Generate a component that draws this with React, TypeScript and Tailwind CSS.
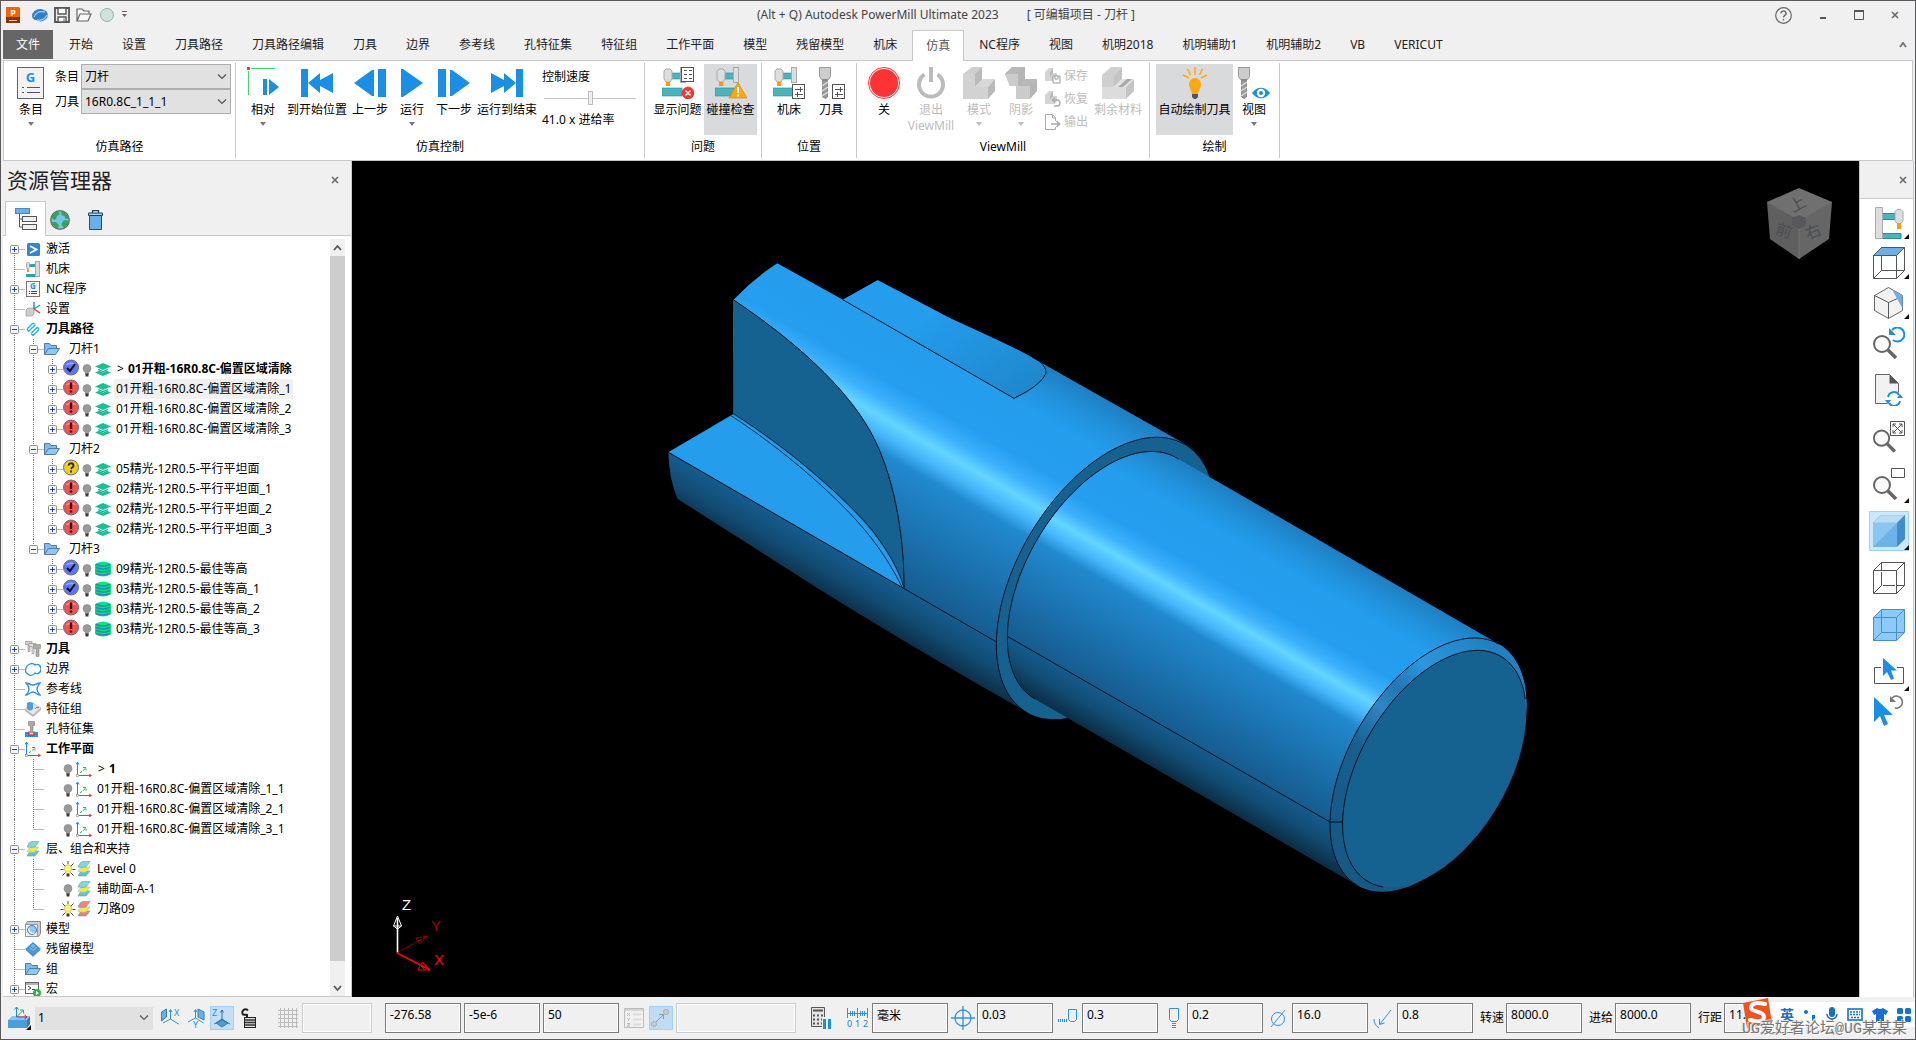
import type { FC, ReactNode } from "react";

/* ---------- ribbon icons ---------- */

const GCodeIcon: FC = () => (
  <svg width="28" height="32" viewBox="0 0 28 32">
    <rect x="0.5" y="0.5" width="26" height="31" fill="#f2f2f2" stroke="#666" />
    <text x="13.5" y="15" textAnchor="middle" fontSize="13" fontWeight="700" fill="#1a8fe8">
      G
    </text>
    <path d="M10 20.5h13M10 25.5h13" stroke="#555" />
    <path d="M5 20.5h2M5 25.5h2" stroke="#555" />
  </svg>
);

const RelativeIcon: FC = () => (
  <svg width="32" height="32" viewBox="0 0 32 32">
    <path d="M1.500 4v24M4 1.500h24" stroke="#3bd671" />
    <rect width="3" height="3" fill="#f33" />
    <rect x="16" y="12" width="4" height="16" fill="#1a8fe8" />
    <path d="M22 12l10 8-10 8z" fill="#1a8fe8" />
  </svg>
);

const ToStartIcon: FC = () => (
  <svg width="32" height="32" viewBox="0 0 32 32" fill="#1a8fe8">
    <path d="M0 2h7v28H0zM7 16L19 6v7l13-7v20l-13-7v7z" />
  </svg>
);

const ToEndIcon: FC = () => (
  <svg width="32" height="32" viewBox="0 0 32 32" fill="#1a8fe8">
    <path d="M25 2h7v28h-7zM25 16L13 6v7L0 6v20l13-7v7z" />
  </svg>
);

const PrevIcon: FC = () => (
  <svg width="32" height="32" viewBox="0 0 32 32" fill="#1a8fe8">
    <path d="M24 2h8v28h-8zM20 3v26h-2L0 16 18 3z" />
  </svg>
);

const NextIcon: FC = () => (
  <svg width="32" height="32" viewBox="0 0 32 32" fill="#1a8fe8">
    <path d="M0 2h8v28H0zM12 3v26h2l18-13L14 3z" />
  </svg>
);

const PlayIcon: FC = () => (
  <svg width="32" height="32" viewBox="0 0 32 32" fill="#1a8fe8">
    <path d="M5 2h2l20 14L7 30H5z" />
  </svg>
);

const MachineShape: FC = () => (
  <>
    <rect x="8" y="6" width="11" height="6" fill="#45b5bf" stroke="#2b8d96" strokeWidth="0.6" />
    <rect x="0" y="21" width="20" height="8" fill="#45b5bf" stroke="#2b8d96" strokeWidth="0.6" />
    <rect x="18.500" y="0.500" width="5" height="15" fill="#ddd" stroke="#aaa" />
    <path d="M4 2h4l2 2v8l-2 3H4l-2-3V4z" fill="#ddd" stroke="#aaa" />
    <rect x="4" y="15" width="4" height="4" fill="#f90" />
  </>
);

const SlidersBadge: FC = () => (
  <g>
    <rect x="19.500" y="17.500" width="12" height="14" fill="#fff" stroke="#555" />
    <path d="M22 22.500h8M22 27.500h8M27.500 20v5M24.500 25v5" stroke="#555" />
  </g>
);

const ShowIssuesIcon: FC = () => (
  <svg width="32" height="32" viewBox="0 0 32 32">
    <MachineShape />
    <rect x="19.500" y="0.500" width="12" height="14" fill="#fff" stroke="#555" />
    <path d="M22 3.500h3m2 0h3M22 7.500h3m2 0h3M22 11.500h3m2 0h3" stroke="#555" />
    <circle cx="26" cy="26" r="6" fill="#f33" stroke="#c11" strokeWidth="0.500" />
    <path d="M23.500 23.500l5 5m0-5l-5 5" stroke="#fff" strokeWidth="1.500" />
  </svg>
);

const CollisionIcon: FC = () => (
  <svg width="32" height="32" viewBox="0 0 32 32">
    <MachineShape />
    <path d="M23 15.500L32 31H14z" fill="#ffa70f" stroke="#c97f00" strokeWidth="0.600" />
    <path d="M23 20v6m0 1.500v2" stroke="#fff" strokeWidth="2" />
  </svg>
);

const MachinePosIcon: FC = () => (
  <svg width="32" height="32" viewBox="0 0 32 32">
    <MachineShape />
    <SlidersBadge />
  </svg>
);

const DrillShape: FC = () => (
  <>
    <path d="M7.500 0.500h11v9l-2 3h-7l-2-3z" fill="#ccc" stroke="#999" />
    <path d="M10.500 13h5v17l-2 1.500-3-1.500z" fill="#999" stroke="#666" strokeWidth="0.600" />
    <path d="M10 19l6-4M10 24l6-4M10 29l6-4" stroke="#ddd" strokeWidth="1.500" />
  </>
);

const ToolPosIcon: FC = () => (
  <svg width="32" height="32" viewBox="0 0 32 32">
    <g transform="translate(-3)">
      <DrillShape />
    </g>
    <g transform="translate(-2)">
      <SlidersBadge />
    </g>
  </svg>
);

const RecordIcon: FC = () => (
  <svg width="32" height="32" viewBox="0 0 32 32">
    <circle cx="16" cy="16" r="15.500" fill="#fff" stroke="#f33" />
    <circle cx="16" cy="16" r="14" fill="#f33" />
  </svg>
);

const PowerIcon: FC = () => (
  <svg width="32" height="32" viewBox="0 0 32 32" fill="none" stroke="#bbb" strokeWidth="4">
    <path d="M9.500 7.500a12 12 0 1 0 13 0M16 0v15" />
  </svg>
);

const ModeIcon: FC = () => (
  <svg width="32" height="32" viewBox="0 0 32 32">
    <path d="M0 7l9-7h10v12l-7 6v13H0z" fill="#cfcfcf" />
    <path d="M12 7l7-7v13l-7 7z" fill="#bababa" />
    <path d="M12 20l8-8h12l-7 8z" fill="#d8d8d8" />
    <path d="M0 7h12v13h13v12H0z" fill="#d2d2d2" />
    <path d="M25 20l7-8v12l-7 8z" fill="#bababa" />
  </svg>
);

const ShadingIcon: FC = () => (
  <svg width="32" height="32" viewBox="0 0 32 32">
    <path d="M0 7l7-7h13v12h12v12l-7 8H11V19H5z" fill="#b5b5b5" />
    <path d="M0 7h13v12h12v13H11V19H5z" fill="#cbcbcb" />
    <path d="M0 7l7-7h13l-7 7zM13 19l7-7h12l-7 7z" fill="#b8b8b8" />
  </svg>
);

const RestIcon: FC = () => (
  <svg width="32" height="32" viewBox="0 0 32 32">
    <path d="M0 8l9-8h11l-8 8v12H0z" fill="#cfcfcf" />
    <path d="M0 20h24v12H0z" fill="#dcdcdc" />
    <path d="M12 8l8-8v12l-8 8z" fill="#c4c4c4" />
    <path d="M24 20l8-8v12l-8 8z" fill="#c4c4c4" />
    <path d="M12 20l8-8h12l-8 8z" fill="#e2e2e2" />
    <path d="M16 20l9-8h5l-9 8z" fill="#aaa" />
  </svg>
);

const BulbIcon: FC = () => (
  <svg width="32" height="32" viewBox="0 0 32 32">
    <path d="M16 0v8M8.500 2l3 6M23.500 2l-3 6M4 8l6 3M28 8l-6 3" stroke="#ffa70f" strokeWidth="1.500" />
    <path d="M16 11a6 6 0 0 0-6 6c0 4 2.500 6 3 10h6c.5-4 3-6 3-10a6 6 0 0 0-6-6z" fill="#ffa70f" />
    <path d="M13 27h6v3l-2 2h-2l-2-2z" fill="#555" />
  </svg>
);

const ViewIcon: FC = () => (
  <svg width="32" height="32" viewBox="0 0 32 32">
    <g transform="translate(-7)">
      <DrillShape />
    </g>
    <path d="M14 26c5-7 13-7 18 0-5 7-13 7-18 0z" fill="#1a8fe8" />
    <circle cx="23" cy="26" r="4.200" fill="#fff" />
    <circle cx="23" cy="26" r="2" fill="#1a8fe8" />
  </svg>
);

const SmallBlock: FC<{ children?: ReactNode }> = ({ children }) => (
  <svg width="16" height="16" viewBox="0 0 16 16">
    <path d="M0 4l4-4h4v5h4v5l-2 3H0z" fill="#d4d4d4" />
    <path d="M5 4l3-4v5l-3 4z" fill="#bbb" />
    {children}
  </svg>
);

/* ---------- explorer tree icons ---------- */

const ActiveIcon = (
  <svg width="16" height="16" viewBox="0 0 16 16">
    <rect x="2" y="2" width="13" height="13" rx="1.500" fill="#2e86d6" />
    <path d="M5 5l6.500 3.500L5 12" fill="none" stroke="#fff" strokeWidth="1.800" />
  </svg>
);
const MachineIcon = (
  <svg width="16" height="16" viewBox="0 0 16 16">
    <path d="M4 3h8v3H4zM1 13h11v3H1z" fill="#2fa3ad" />
    <rect x="10.500" y="0.500" width="4" height="15" fill="#ddd" stroke="#aaa" />
    <rect x="1.500" y="1.500" width="3" height="6" rx="1" fill="#ddd" stroke="#aaa" />
    <rect x="2" y="8" width="2" height="3" fill="#f90" />
  </svg>
);
const NcIcon = (
  <svg width="16" height="16" viewBox="0 0 16 16" className="overflow-visible">
    <rect x="1.500" y="0.500" width="13" height="15" fill="#f6f6f6" stroke="#777" />
    <text x="8" y="8" textAnchor="middle" fontSize="8" fontWeight="700" fill="#1a8fe8">
      G
    </text>
    <path d="M4 10.500h1m1 0h6M4 12.500h1m1 0h6" stroke="#444" />
  </svg>
);
const SetupIcon = (
  <svg width="16" height="16" viewBox="0 0 16 16">
    <path d="M1 9l2-2h6v6l-2 2H1z" fill="#ccc" stroke="#999" strokeWidth="0.700" />
    <path d="M9 8V1" stroke="#1a8fe8" strokeWidth="1.500" />
    <path d="M9 8l6-4" stroke="#2bb35a" strokeWidth="1.500" />
    <path d="M9 8l6 4" stroke="#e33" strokeWidth="1.500" />
  </svg>
);
const ToolpathIcon = (
  <svg width="16" height="16" viewBox="0 0 16 16" fill="none" stroke="#19b6dd" strokeWidth="1.300">
    <path d="M2 8l6-6M3.500 10.500l7-7M6 12.500l6.500-6.500M8 14.500l6-6M2 8l1.500 2.500M10.500 3.500L8 2M6 12.500l2 2M12.500 6L14 8.500" />
  </svg>
);
const FolderIcon = (
  <svg width="16" height="16" viewBox="0 0 16 16">
    <path d="M0.500 13.500v-11h5l1.500 2h5.500v3" fill="#7dbcf2" stroke="#56789a" />
    <path d="M0.500 13.500l4-6h11l-4 6z" fill="#8cc8fa" stroke="#56789a" />
  </svg>
);
const ToolsIcon = (
  <svg width="16" height="16" viewBox="0 0 16 16" stroke="#888" strokeWidth="0.600">
    <path d="M0 0.500h7v3H5v7H3v-7H0z" fill="#ccc" />
    <path d="M4 2.500h7v3H9v7H7v-7H4z" fill="#ddd" />
    <path d="M8.500 3.500h7v4h-1.500v8h-3v-8H8.500z" fill="#aaa" />
  </svg>
);
const BoundaryIcon = (
  <svg width="16" height="16" viewBox="0 0 16 16">
    <path
      d="M5 3c2-1 4 0 5 1 3-2 6 1 6 4s-3 6-6 4c-2 3-6 3-7 1-4-1-3-8 2-10z"
      fill="none"
      stroke="#2c92e0"
      strokeWidth="1.300"
    />
  </svg>
);
const PatternIcon = (
  <svg width="16" height="16" viewBox="0 0 16 16">
    <path
      d="M1 2c3 0 4 2 7 2s4-2 7-2c-2 3-3 4-3 6s1 4 3 6c-3 0-4-3-7-3s-4 3-7 3c2-2 3-4 3-6S3 4 1 2z"
      fill="none"
      stroke="#2c92e0"
      strokeWidth="1.400"
    />
  </svg>
);
const FeatureGroupIcon = (
  <svg width="16" height="16" viewBox="0 0 16 16">
    <path d="M0 8l8-6 8 5-8 7z" fill="#e8e8e8" stroke="#aaa" strokeWidth="0.600" />
    <path d="M0 8l8 6 8-7v2l-8 7-8-6z" fill="#b5b5b5" />
    <path d="M2 2v6c2 2 4 2 6 0V2c-2-1.500-4-1.500-6 0z" fill="#4a9fdb" />
    <path d="M10 8c1-2 3-2 4-1" stroke="#3a87c2" fill="none" />
  </svg>
);
const HoleSetIcon = (
  <svg width="16" height="16" viewBox="0 0 16 16">
    <path d="M0 11h4v5H0zM9 11h4v5H9zM3 14h7v2H3z" fill="#2c92e0" />
    <path d="M4 10.500v3.500h5v-3.500" fill="none" stroke="#e33" strokeWidth="1.500" />
    <path d="M3.500 0.500h6v4H8v7.500H5.500V4.500h-2z" fill="#aaa" stroke="#777" strokeWidth="0.600" />
  </svg>
);
const WorkplaneIcon = (
  <svg width="16" height="16" viewBox="0 0 16 16">
    <path d="M1.500 14V2M0 3.500L1.500 1 3 3.500" stroke="#1a8fe8" fill="none" />
    <path d="M3 14.500h12M13 13l2.500 1.500L13 16" stroke="#f33" fill="none" />
    <path d="M4 12l6-5M7 6.500h3v3" stroke="#2bb35a" strokeDasharray="3 1" fill="none" />
    <rect x="0.500" y="13.500" width="2" height="2" fill="#fff" stroke="#999" strokeWidth="0.700" />
  </svg>
);
const levelIcon = (top: string, bottom: string) => (
  <svg width="16" height="16" viewBox="0 0 16 16" strokeWidth="0.600" stroke="#5aa">
    <path d="M2 15q2-4.500 4-5h8l-4 5z" fill={bottom} />
    <path d="M2 10.500q2-4.500 5-4.500h7l-4 5q-4 .5-8-.5z" fill="#f5ea3c" stroke="#bb9" />
    <path d="M2 6q2-5.500 5-5.500h7l-4 5.500q-4 .8-8 0z" fill={top} />
  </svg>
);
const LevelIcon = levelIcon("#7fd6e6", "#5fc3d8");
const LevelRedIcon = levelIcon("#f58080", "#ef7a7a");
const ModelIcon = (
  <svg width="16" height="16" viewBox="0 0 16 16">
    <path d="M0.500 3.500l2-3h13v12l-2 3h-13z" fill="#ccc" stroke="#888" />
    <path d="M0.500 3.500h12v12h-12z" fill="#eee" stroke="#999" />
    <circle cx="7" cy="9" r="4.500" fill="#8cc8fa" stroke="#4a80b0" />
    <path d="M4.500 6a4 4 0 0 0 6 5.500A4.500 4.500 0 0 1 4.500 6z" fill="#fff" />
  </svg>
);
const StockIcon = (
  <svg width="16" height="16" viewBox="0 0 16 16">
    <path d="M0 8l8-7 8 7-8 8z" fill="#4f9cd8" />
    <path d="M3 7l5-5 5 5-5 4z" fill="#6db4ea" stroke="#357fb8" strokeWidth="0.700" />
    <path d="M1 9l7 5 7-5M5 5l3 3 3-3" stroke="#357fb8" strokeWidth="0.700" fill="none" />
  </svg>
);
const MacroIcon = (
  <svg width="16" height="16" viewBox="0 0 16 16">
    <rect x="0.500" y="1.500" width="13" height="11" fill="#fff" stroke="#666" />
    <path d="M0 3h14" stroke="#666" />
    <path d="M3 5l3 2-3 2M7 8.500h3" stroke="#444" fill="none" />
    <circle cx="12" cy="12" r="4" fill="#2bb350" />
    <path d="M11 10l3 2-3 2z" fill="#fff" />
  </svg>
);
const OffsetIcon = (
  <svg width="16" height="16" viewBox="0 0 16 16">
    <path d="M0 5.500L8 2l8 3.500L8 9z" fill="#12c48f" />
    <path d="M0 11.500l4-1.700 4 1.700 4-1.700 4 1.700L8 15z" fill="#12c48f" />
    <path d="M3 8.500l5 2 5-2" fill="none" stroke="#19a6ad" strokeWidth="1.300" />
  </svg>
);
const ConstantZIcon = (
  <svg width="16" height="16" viewBox="0 0 16 16">
    <path d="M0 3q8-5 16 0v10q-8 5-16 0z" fill="#00e878" />
    <path
      d="M1 3.500q7 3 14 0M1 6.500q7 3 14 0M1 9.500q7 3 14 0M1 12.500q7 3 14 0"
      fill="none"
      stroke="#1f8fb5"
      strokeWidth="1.400"
    />
  </svg>
);

const StatusDot: FC<{ kind: string }> = ({ kind }) => {
  const fill = kind === "ok" ? "#5b76ff" : kind === "warn" ? "#f2524f" : "#f0cc1e";
  return (
    <svg width="16" height="20" viewBox="0 0 16 20" className="shrink-0">
      <circle cx="8" cy="8.500" r="7.500" fill={fill} stroke="#6b6b7d" />
      <path d="M2.500 6.500a6 5 0 0 1 11 0q-5-2.500-11 0z" fill="#fff" opacity="0.400" />
      {kind === "ok" && <path d="M4 9l3 3 5-7" fill="none" stroke="#111" strokeWidth="2" />}
      {kind === "warn" && <path d="M8 3.500v6.500m0 1.500v2" stroke="#400" strokeWidth="2.400" />}
      {kind === "ask" && (
        <path d="M5.500 6.500a2.500 2.200 0 1 1 3.500 2l-1 1.500m0 1.500v2" fill="none" stroke="#222" strokeWidth="1.800" />
      )}
    </svg>
  );
};

const Lamp: FC<{ on?: boolean }> = ({ on }) => (
  <svg width="16" height="20" viewBox="0 0 16 20" className="shrink-0">
    {on && (
      <path
        d="M8 2v3M0.500 10.500h3M12.500 10.500h3M2.500 4.500l3 3M13.500 4.500l-3 3M2.500 16.500l3-3M13.500 16.500l-3-3"
        stroke="#444"
      />
    )}
    <circle cx="8" cy="9.500" r={on ? 3.700 : 4} fill={on ? "#fff27a" : "#999"} stroke={on ? "#b39b2e" : "#888"} strokeWidth="0.600" />
    <path d="M6 12.500h4v3H6z" fill={on ? "#fff27a" : "#999"} />
    <path d="M6.500 14.500h3v3h-3z" fill="#4a3430" />
  </svg>
);

/* ---------- shared pieces ---------- */

const Chevron: FC = () => (
  <svg width="10" height="6" viewBox="0 0 10 6" className="pointer-events-none absolute right-1 top-1/2 -translate-y-1/2">
    <path d="M1 0.500l4 4 4-4" fill="none" stroke="#555" strokeWidth="1.200" />
  </svg>
);

const CloseIcon: FC = () => (
  <svg width="8" height="8" viewBox="0 0 8 8">
    <path d="M1 1l6 6M7 1L1 7" stroke="#666" strokeWidth="1.500" />
  </svg>
);

interface IRibbonButtonProps {
  label: string;
  second?: string;
  icon: ReactNode;
  width: string;
  active?: boolean;
  arrow?: boolean;
  disabled?: boolean;
}

const RibbonButton: FC<IRibbonButtonProps> = ({ label, second, icon, width, active, arrow, disabled }) => (
  <button
    type="button"
    disabled={disabled}
    className={`flex h-[71px] flex-col items-center pt-[3px] leading-4 whitespace-nowrap ${width} ${
      active ? "bg-[#d9dadc]" : ""
    } ${disabled ? "text-[#bdbdbd]" : ""}`}
  >
    {icon}
    <span className="mt-[3px]">{label}</span>
    {second && <span>{second}</span>}
    {arrow && (
      <svg width="6" height="4" viewBox="0 0 6 4" className="mt-1">
        <path d="M0 0h6L3 4z" fill={disabled ? "#bbb" : "#777"} />
      </svg>
    )}
  </button>
);

const RibbonGroup: FC<{ title: string; children: ReactNode }> = ({ title, children }) => (
  <section className="my-[2px] flex flex-col border-r border-[#c8c8c8]">
    <div className="flex pt-[1px] pr-1 pl-[6px]">{children}</div>
    <h2 className="mt-1 text-center leading-4">{title}</h2>
  </section>
);

/* ---------- title bar and ribbon ---------- */

const TitleBar: FC = () => (
  <header className="flex h-[29px] shrink-0 items-center pb-[1px]">
    <div className="flex flex-1 items-center gap-[6px] pl-1">
      <svg width="16" height="18" viewBox="0 0 16 18">
        <path d="M1 1h13l1 1v15H1z" fill="#f0640a" />
        <path d="M1 11h14v6H1z" fill="#8c3405" />
        <text x="8" y="9.500" textAnchor="middle" fontSize="9" fontWeight="700" fill="#fff">
          P
        </text>
        <path d="M4 14.500h8" stroke="#e8c8b4" />
      </svg>
      <svg width="16" height="16" viewBox="0 0 16 16" className="ml-[5px]">
        <path d="M0 9c0-5 7-9 12-6 4 1 5 6 2 9s-7 3-10 1c-2 0-4-2-4-4z" fill="#2d7fc9" />
        <path d="M2 10c2-5 6-6 11-5M5 13c5 1 8-1 10-5" stroke="#8fd0ff" fill="none" strokeWidth="1.300" />
      </svg>
      <svg width="16" height="16" viewBox="0 0 16 16">
        <path d="M1 1h14v14H1z" fill="#eee" stroke="#555" strokeWidth="1.800" />
        <path d="M4 1h8v6H4zM4 10h8v5H4z" fill="#fff" stroke="#555" strokeWidth="1.400" />
        <path d="M10 11.500v3" stroke="#555" />
      </svg>
      <svg width="16" height="16" viewBox="0 0 16 16">
        <path d="M1 14V2h5l2 2h5v3M1 14l3-7h11l-3 7z" fill="#f7f7f7" stroke="#666" strokeWidth="1.200" />
      </svg>
      <svg width="16" height="16" viewBox="0 0 16 16" className="ml-[1px]">
        <circle cx="8" cy="8" r="6.500" fill="#cfe3db" stroke="#8fb5a5" />
      </svg>
      <svg width="7" height="8" viewBox="0 0 7 8">
        <path d="M1 0.500h5" stroke="#666" />
        <path d="M1 3h5L3.500 6z" fill="#666" />
      </svg>
    </div>
    <h1 className="pr-3 leading-4 whitespace-pre text-[#444]">
      (Alt + Q) Autodesk PowerMill Ultimate 2023{"        "} [ 可编辑项目 - 刀杆 ]
    </h1>
    <div className="flex flex-1 items-center justify-end gap-[27px] pr-4">
      <button type="button" aria-label="help">
        <svg width="17" height="17" viewBox="0 0 17 17" fill="none" stroke="#666">
          <circle cx="8.500" cy="8.500" r="7.800" strokeWidth="1.200" />
          <path d="M6 6.500a2.500 2.300 0 1 1 3.500 2l-1 1.500v.5m0 1.500v1.500" strokeWidth="1.400" />
        </svg>
      </button>
      <button type="button" aria-label="minimize">
        <svg width="8" height="10" viewBox="0 0 8 10">
          <path d="M1 8h6" stroke="#555" strokeWidth="2" />
        </svg>
      </button>
      <button type="button" aria-label="maximize">
        <svg width="10" height="10" viewBox="0 0 10 10">
          <path d="M0.500 1h9v8.500h-9z" fill="none" stroke="#555" />
          <path d="M0 1h10" stroke="#555" strokeWidth="2" />
        </svg>
      </button>
      <button type="button" aria-label="close">
        <CloseIcon />
      </button>
    </div>
  </header>
);

const TABS = [
  "开始",
  "设置",
  "刀具路径",
  "刀具路径编辑",
  "刀具",
  "边界",
  "参考线",
  "孔特征集",
  "特征组",
  "工作平面",
  "模型",
  "残留模型",
  "机床",
  "仿真",
  "NC程序",
  "视图",
  "机明2018",
  "机明辅助1",
  "机明辅助2",
  "VB",
  "VERICUT",
];

const TabBar: FC = () => (
  <nav className="mx-[2px] flex h-[30px] shrink-0 whitespace-nowrap">
    <button type="button" className="mb-[1px] w-[50px] bg-[#666] text-white">
      文件
    </button>
    <div className="ml-[2px] flex flex-1 gap-[1px]">
      {TABS.map((tab) => (
        <button
          key={tab}
          type="button"
          className={
            tab === "仿真"
              ? "relative -mb-[1px] border border-b-0 border-[#c8c8c8] bg-white px-[13px] text-[#555]"
              : "px-[14px] text-[#222]"
          }
        >
          {tab}
        </button>
      ))}
    </div>
    <button type="button" aria-label="collapse" className="px-1.5">
      <svg width="8" height="6" viewBox="0 0 8 6">
        <path d="M1 5l3-4 3 4" fill="none" stroke="#777" strokeWidth="2" />
      </svg>
    </button>
  </nav>
);

const Ribbon: FC = () => (
  <div className="mx-[2px] flex h-[101px] shrink-0 border border-[#c8c8c8] bg-white">
    <RibbonGroup title="仿真路径">
      <RibbonButton label="条目" icon={<GCodeIcon />} width="w-[42px]" arrow />
      <div className="ml-[3px] grid grid-cols-[26px_150px] content-start">
        <label htmlFor="entry" className="self-center">
          条目
        </label>
        <div className="relative">
          <select id="entry" className="h-[25px] w-full appearance-none border border-[#adadad] bg-[#e1e1e1] pl-[3px]">
            <option>刀杆</option>
          </select>
          <Chevron />
        </div>
        <label htmlFor="tool" className="self-center">
          刀具
        </label>
        <div className="relative">
          <select id="tool" className="h-[25px] w-full appearance-none border border-[#adadad] bg-[#e1e1e1] pl-[3px]">
            <option>16R0.8C_1_1_1</option>
          </select>
          <Chevron />
        </div>
      </div>
    </RibbonGroup>
    <RibbonGroup title="仿真控制">
      <RibbonButton label="相对" icon={<RelativeIcon />} width="w-[42px]" arrow />
      <RibbonButton label="到开始位置" icon={<ToStartIcon />} width="w-[66px]" />
      <RibbonButton label="上一步" icon={<PrevIcon />} width="w-[40px]" />
      <RibbonButton label="运行" icon={<PlayIcon />} width="w-[44px]" arrow />
      <RibbonButton label="下一步" icon={<NextIcon />} width="w-[40px]" />
      <RibbonButton label="运行到结束" icon={<ToEndIcon />} width="w-[66px]" />
      <div className="flex w-[100px] flex-col pt-[5px] pl-[2px]">
        <label htmlFor="speed" className="leading-4">
          控制速度
        </label>
        <input
          id="speed"
          type="range"
          defaultValue={51}
          className="mt-[5px] ml-[2px] h-4 w-[92px] appearance-none bg-[linear-gradient(#c4c4c4,#c4c4c4)] bg-[length:100%_1px] bg-center bg-no-repeat [&::-webkit-slider-thumb]:h-[14px] [&::-webkit-slider-thumb]:w-[5px] [&::-webkit-slider-thumb]:appearance-none [&::-webkit-slider-thumb]:border [&::-webkit-slider-thumb]:border-[#bbb] [&::-webkit-slider-thumb]:bg-[#f0f0f0]"
        />
        <span className="mt-[6px] leading-4">41.0 x 进给率</span>
      </div>
    </RibbonGroup>
    <RibbonGroup title="问题">
      <RibbonButton label="显示问题" icon={<ShowIssuesIcon />} width="w-[53px]" />
      <RibbonButton label="碰撞检查" icon={<CollisionIcon />} width="w-[53px]" active />
    </RibbonGroup>
    <RibbonGroup title="位置">
      <RibbonButton label="机床" icon={<MachinePosIcon />} width="w-[42px]" />
      <RibbonButton label="刀具" icon={<ToolPosIcon />} width="w-[42px]" />
    </RibbonGroup>
    <RibbonGroup title="ViewMill">
      <RibbonButton label="关" icon={<RecordIcon />} width="w-[42px]" />
      <RibbonButton label="退出" second="ViewMill" icon={<PowerIcon />} width="w-[52px]" disabled />
      <RibbonButton label="模式" icon={<ModeIcon />} width="w-[44px]" arrow disabled />
      <RibbonButton label="阴影" icon={<ShadingIcon />} width="w-[40px]" arrow disabled />
      <div className="flex w-[50px] flex-col pl-1 text-[#bdbdbd]">
        <button type="button" disabled className="flex h-[23px] items-center gap-[3px] whitespace-nowrap">
          <SmallBlock>
            <path d="M8 8h7v7H8z" fill="#fff" stroke="#999" />
            <path d="M10 8v3h3V8" stroke="#999" fill="none" />
          </SmallBlock>
          保存
        </button>
        <button type="button" disabled className="flex h-[23px] items-center gap-[3px] whitespace-nowrap">
          <SmallBlock>
            <path d="M8 9h4a3 3 0 0 1 0 6H9M10 6.500L7.500 9l2.500 2.500" stroke="#aaa" fill="none" strokeWidth="1.300" />
          </SmallBlock>
          恢复
        </button>
        <button type="button" disabled className="flex h-[23px] items-center gap-[3px] whitespace-nowrap">
          <svg width="16" height="16" viewBox="0 0 16 16" fill="none" stroke="#aaa">
            <path d="M10.500 7V4L7.500 0.500H0.500v15h10V13M7.500 0.500V4h3" />
            <path d="M6 10h8M11.500 7l3 3-3 3" strokeWidth="1.600" />
          </svg>
          输出
        </button>
      </div>
      <RibbonButton label="剩余材料" icon={<RestIcon />} width="w-[54px]" disabled />
    </RibbonGroup>
    <RibbonGroup title="绘制">
      <RibbonButton label="自动绘制刀具" icon={<BulbIcon />} width="w-[77px]" active />
      <RibbonButton label="视图" icon={<ViewIcon />} width="w-[42px]" arrow />
    </RibbonGroup>
  </div>
);

/* ---------- explorer ---------- */

interface ITreeRow {
  depth: number;
  label: string;
  icon: ReactNode;
  box?: "+" | "-";
  status?: string;
  lamp?: "on" | "off";
  bold?: boolean;
  current?: boolean;
  selected?: boolean;
  last?: boolean;
  // whether the parent level's line runs on past this row
  parentLine?: boolean;
}

const toolpath = (status: string, label: string, icon: ReactNode, rest: Partial<ITreeRow> = {}): ITreeRow => ({
  depth: 2,
  box: "+",
  lamp: "off",
  parentLine: true,
  status,
  label,
  icon,
  ...rest,
});

const ROWS: ITreeRow[] = [
  { depth: 0, label: "激活", icon: ActiveIcon, box: "+" },
  { depth: 0, label: "机床", icon: MachineIcon },
  { depth: 0, label: "NC程序", icon: NcIcon, box: "+" },
  { depth: 0, label: "设置", icon: SetupIcon },
  { depth: 0, label: "刀具路径", icon: ToolpathIcon, box: "-", bold: true },
  { depth: 1, label: "刀杆1", icon: FolderIcon, box: "-" },
  toolpath("ok", "01开粗-16R0.8C-偏置区域清除", OffsetIcon, { bold: true, current: true }),
  toolpath("warn", "01开粗-16R0.8C-偏置区域清除_1", OffsetIcon, { selected: true }),
  toolpath("warn", "01开粗-16R0.8C-偏置区域清除_2", OffsetIcon),
  toolpath("warn", "01开粗-16R0.8C-偏置区域清除_3", OffsetIcon, { last: true }),
  { depth: 1, label: "刀杆2", icon: FolderIcon, box: "-" },
  toolpath("ask", "05精光-12R0.5-平行平坦面", OffsetIcon),
  toolpath("warn", "02精光-12R0.5-平行平坦面_1", OffsetIcon),
  toolpath("warn", "02精光-12R0.5-平行平坦面_2", OffsetIcon),
  toolpath("warn", "02精光-12R0.5-平行平坦面_3", OffsetIcon, { last: true }),
  { depth: 1, label: "刀杆3", icon: FolderIcon, box: "-", last: true },
  toolpath("ok", "09精光-12R0.5-最佳等高", ConstantZIcon, { parentLine: false }),
  toolpath("ok", "03精光-12R0.5-最佳等高_1", ConstantZIcon, { parentLine: false }),
  toolpath("warn", "03精光-12R0.5-最佳等高_2", ConstantZIcon, { parentLine: false }),
  toolpath("warn", "03精光-12R0.5-最佳等高_3", ConstantZIcon, { parentLine: false, last: true }),
  { depth: 0, label: "刀具", icon: ToolsIcon, box: "+", bold: true },
  { depth: 0, label: "边界", icon: BoundaryIcon, box: "+" },
  { depth: 0, label: "参考线", icon: PatternIcon },
  { depth: 0, label: "特征组", icon: FeatureGroupIcon },
  { depth: 0, label: "孔特征集", icon: HoleSetIcon },
  { depth: 0, label: "工作平面", icon: WorkplaneIcon, box: "-", bold: true },
  { depth: 1, label: "1", icon: WorkplaneIcon, lamp: "off", bold: true, current: true },
  { depth: 1, label: "01开粗-16R0.8C-偏置区域清除_1_1", icon: WorkplaneIcon, lamp: "off" },
  { depth: 1, label: "01开粗-16R0.8C-偏置区域清除_2_1", icon: WorkplaneIcon, lamp: "off" },
  { depth: 1, label: "01开粗-16R0.8C-偏置区域清除_3_1", icon: WorkplaneIcon, lamp: "off", last: true },
  { depth: 0, label: "层、组合和夹持", icon: LevelIcon, box: "-" },
  { depth: 1, label: "Level 0", icon: LevelIcon, lamp: "on" },
  { depth: 1, label: "辅助面-A-1", icon: LevelIcon, lamp: "off" },
  { depth: 1, label: "刀路09", icon: LevelRedIcon, lamp: "on", last: true },
  { depth: 0, label: "模型", icon: ModelIcon, box: "+" },
  { depth: 0, label: "残留模型", icon: StockIcon },
  { depth: 0, label: "组", icon: FolderIcon },
  { depth: 0, label: "宏", icon: MacroIcon, box: "+" },
];

const Guide: FC<{ line?: boolean }> = ({ line }) => (
  <span className="flex w-[19px] shrink-0 self-stretch pl-[9px]">
    {line && <span className="border-l border-dotted border-[#777]" />}
  </span>
);

const TreeRow: FC<{ row: ITreeRow; first: boolean }> = ({ row, first }) => (
  <li className="flex h-5 items-center whitespace-nowrap">
    {row.depth > 0 && <Guide line />}
    {row.depth > 1 && <Guide line={row.parentLine} />}
    <svg width="20" height="20" viewBox="0 0 20 20" className="shrink-0">
      <path
        d={`M9.500 ${first ? 10 : 0}V${row.last ? 10 : 20}M9.500 10.500H20`}
        stroke="#777"
        strokeDasharray="1 1"
      />
      {row.box && <rect x="5.500" y="6.500" width="8" height="8" rx="1" fill="#f6f6f6" stroke="#8f8f8f" />}
      {row.box && <path d="M7 10.500h5" stroke="#24449c" />}
      {row.box === "+" && <path d="M9.500 8v5" stroke="#24449c" />}
    </svg>
    {row.status && <StatusDot kind={row.status} />}
    {row.depth === 1 && row.lamp && <span className="w-4 shrink-0" />}
    {row.lamp && <Lamp on={row.lamp === "on"} />}
    <span className="shrink-0">{row.icon}</span>
    {row.depth === 1 && !row.lamp && <span className="w-1" />}
    <span
      className={`ml-[3px] px-[2px] py-[2px] leading-4 ${row.bold ? "font-bold" : ""} ${
        row.selected ? "bg-[#f0f0f0]" : ""
      }`}
    >
      {row.current && <span className="mx-[1px] font-normal">&gt; </span>}
      {row.label}
    </span>
  </li>
);

const Explorer: FC = () => (
  <aside className="ml-[2px] flex w-[349px] shrink-0 flex-col border-r border-[#c8c8c8]">
    <div className="flex h-10 items-center justify-between pr-3 pb-[2px] pl-1">
      <h2 className="text-[21px] leading-8 text-[#222]">资源管理器</h2>
      <button type="button" aria-label="close panel">
        <CloseIcon />
      </button>
    </div>
    <div className="flex h-[34px] items-center pl-[2px]">
      <button
        type="button"
        aria-label="tree"
        className="relative -mb-[1px] flex h-[35px] w-[41px] items-center justify-center border border-b-0 border-[#c8c8c8] bg-white"
      >
        <svg width="22" height="22" viewBox="0 0 22 22">
          <path d="M4.500 6v13H8M4.500 11H8" fill="none" stroke="#555" />
          <rect x="0.500" y="0.500" width="14" height="5" fill="#6ab0e6" stroke="#4a8cc0" />
          <rect x="7.500" y="8.500" width="14" height="5" fill="#f0f0f0" stroke="#555" />
          <rect x="7.500" y="16.500" width="14" height="5" fill="#f0f0f0" stroke="#555" />
        </svg>
      </button>
      <button type="button" aria-label="web" className="ml-1 pt-1">
        <svg width="20" height="20" viewBox="0 0 20 20">
          <circle cx="10" cy="10" r="9.300" fill="#7cc0f0" stroke="#666" strokeWidth="1.300" />
          <path
            d="M1.500 8Q3 3 8 1.500L10 4 7 6 6 9l-2 1zM11 1.500q6 1 7.500 7l-3 .5-1-3-3-1zM2 12l4 0 3 3-1 3.500Q3 17 2 12zM13 11l3-1 2.500 1q-1 5-5 6.500l-2-3z"
            fill="#2ea84f"
          />
        </svg>
      </button>
      <button type="button" aria-label="recycle bin" className="ml-[18px] pt-1">
        <svg width="15" height="20" viewBox="0 0 15 20">
          <path d="M1.500 5.500h12v14h-12z" fill="#6ab0e6" stroke="#24506e" />
          <path d="M0.500 3h14v2.500h-14z" fill="#9ccdf2" stroke="#24405a" />
          <path d="M4.500 3V0.700h6V3" fill="none" stroke="#24405a" strokeWidth="1.200" />
        </svg>
      </button>
    </div>
    <div className="flex min-h-0 flex-1 border-y border-[#c8c8c8] bg-white pt-[3px]">
      <ul className="min-w-0 flex-1 overflow-hidden pl-[2px]">
        {ROWS.map((row, i) => (
          <TreeRow key={i} row={row} first={i === 0} />
        ))}
      </ul>
      <div className="mr-[6px] flex w-[15px] flex-col items-center bg-[#f0f0f0]">
        <svg width="15" height="17" viewBox="0 0 15 17">
          <path d="M4 11l3.500-4 3.500 4" fill="none" stroke="#555" strokeWidth="1.800" />
        </svg>
        <div className="w-full flex-1 bg-[#cdcdcd]" />
        <svg width="15" height="35" viewBox="0 0 15 35">
          <path d="M4 25l3.500 4 3.500-4" fill="none" stroke="#555" strokeWidth="1.800" />
        </svg>
      </div>
    </div>
  </aside>
);

/* ---------- viewport ---------- */

// points of a tilted ring of the shaft, t in degrees
const ring = (cx: number, cy: number, k: number, from: number, to: number) => {
  const points: string[] = [];
  const steps = 60;
  for (let i = 0; i <= steps; i++) {
    const t = ((from + ((to - from) * i) / steps) * Math.PI) / 180;
    const x = cx + 175 * k * Math.cos(t);
    const y = cy - k * (144 * Math.cos(t) + 270 * Math.sin(t));
    points.push(`${x.toFixed(1)} ${y.toFixed(1)}`);
  }
  return points.join(" L");
};

const ShaftStops: FC = () => (
  <>
    <stop offset="0" stopColor="#1d7fc2" />
    <stop offset="0.080" stopColor="#2292dc" />
    <stop offset="0.150" stopColor="#239dec" />
    <stop offset="0.300" stopColor="#249eee" />
    <stop offset="0.360" stopColor="#3cb0fc" />
    <stop offset="0.410" stopColor="#64d5ff" />
    <stop offset="0.460" stopColor="#46b6fb" />
    <stop offset="0.510" stopColor="#2189ce" />
    <stop offset="0.660" stopColor="#1c76b4" />
    <stop offset="0.850" stopColor="#165d90" />
    <stop offset="0.930" stopColor="#114b72" />
    <stop offset="1" stopColor="#0c2f48" />
  </>
);

const ToolHolder: FC = () => (
  <svg viewBox="0 0 1506 836" className="absolute inset-0 h-full w-full">
    <defs>
      <linearGradient id="bigShaft" gradientUnits="userSpaceOnUse" x1="0" y1="-260" x2="-420" y2="278">
        <ShaftStops />
      </linearGradient>
      <linearGradient id="smallShaft" gradientUnits="userSpaceOnUse" x1="0" y1="-215" x2="-376" y2="267">
        <ShaftStops />
      </linearGradient>
      <linearGradient id="chamfer" x1="0.800" y1="0" x2="0.100" y2="0.900">
        <stop offset="0" stopColor="#2080c0" />
        <stop offset="0.250" stopColor="#2b97de" />
        <stop offset="0.380" stopColor="#2277b4" />
        <stop offset="0.480" stopColor="#2f86c4" />
        <stop offset="0.650" stopColor="#185f91" />
        <stop offset="1" stopColor="#155985" />
      </linearGradient>
      <linearGradient id="slot" x1="0" y1="0" x2="1" y2="0.800">
        <stop offset="0.400" stopColor="#239dec" />
        <stop offset="1" stopColor="#1f88cd" />
      </linearGradient>
    </defs>
    <g
      transform="translate(308 89) scale(.5612 .4145)"
      fill="none"
      stroke="#04121d"
      strokeLinejoin="round"
      className="[&_path]:[vector-effect:non-scaling-stroke]"
    >
      <path
        d="M130 120Q165 70 208 32L325 120 387 73 515 164 600 217 650 250 680 273 933 467 653 1115Q450 960 275 812L30 600Q15 550 14 488L130 395z"
        fill="url(#bigShaft)"
        stroke="none"
      />
      <path
        d="M325 120L387 73 515 164 600 217 650 250Q690 280 687 297 680 325 630 358z"
        fill="url(#slot)"
        stroke="none"
      />
      <path d="M325 120L630 358Q680 325 687 297 688 285 676 268" />
      <path
        d="M130 120C240 220 330 330 375 440 415 540 434 680 434 815 425 770 410 735 375 675 330 600 230 480 130 395z"
        fill="#15618f"
        stroke="none"
      />
      <path d="M14 488L130 397C230 482 330 602 375 677 410 737 428 785 432 815z" fill="#239dec" stroke="none" />
      <path d="M130 120C240 220 330 330 375 440 415 540 434 680 434 815" />
      <path
        d="M130 395C230 480 330 600 375 672 410 732 428 785 434 815M126 400C226 488 320 602 368 682 400 735 420 785 430 812"
        strokeWidth="0.800"
      />
      <path d="M14 488L434 817 598 945" />
      <path d={`M${ring(793, 792, 1.112, 0, 360)}z`} fill="#15618f" stroke="none" />
      <path d={`M${ring(793, 792, 1.112, 44, 224)}`} />
      <path
        d={`M${ring(793, 792, 1, 43.9, 223.9)} L${ring(1368, 1242, 1, 223.9, 403.9)}z`}
        fill="url(#smallShaft)"
        stroke="none"
      />
      <path d={`M${ring(793, 792, 1, 42, 224)}`} />
      <path d={`M${ring(1368, 1242, 1, 0, 360)}z`} fill="url(#chamfer)" stroke="none" />
      <path d={`M${ring(1368, 1242, 1, 44, 224)}`} />
      <path d={`M${ring(1379, 1252, 0.935, 0, 360)}z`} fill="#15618f" stroke="none" />
      <path d={`M${ring(1379, 1252, 0.935, 8, 236)}`} />
      <path d="M618 932L1193 1380h23" />
    </g>
  </svg>
);

const AxisTriad: FC = () => (
  <svg width="60" height="80" viewBox="0 0 60 80" className="absolute bottom-[21px] left-[38px]" fill="none">
    <path d="M7.500 57V22" stroke="#fff" strokeWidth="1.600" />
    <path d="M7.500 20l-4 10 4 3 4-3zM3.500 30h8" stroke="#fff" />
    <path d="M7 57l30-17M37 40l-11 2 4 6zM28 45l6-3" stroke="#a00000" strokeDasharray="4 1" />
    <path d="M7 57l33 17" stroke="#f00" strokeWidth="1.600" />
    <path d="M40 74l-8-8-4 8zM31 70l4 4" stroke="#f00" />
    <g fontSize="15" fontFamily="Liberation Sans">
      <text x="12" y="14" fill="#fff">
        Z
      </text>
      <text x="41" y="35" fill="#a00000">
        Y
      </text>
      <text x="44" y="69" fill="#f00">
        X
      </text>
    </g>
  </svg>
);

const ViewCube: FC = () => (
  <svg width="65" height="71" viewBox="0 0 65 71" className="absolute top-[27px] right-[27px]">
    <path d="M32 0l33 14-33 18L0 14z" fill="#707070" />
    <path d="M0 14l32 18v39L3 51z" fill="#5f5f5f" />
    <path d="M65 14L32 32v39l30-20z" fill="#666" />
    <path d="M0 14l32 18 33-18M32 32v39" stroke="#7c7c7c" strokeWidth="0.700" fill="none" />
    <path d="M25 30l7-3 7 3v7l-7 4-7-4z" fill="#56585c" />
    <g fill="#4b4e53" fontSize="16" textAnchor="middle">
      <text transform="translate(33 21) rotate(-28)">上</text>
      <text transform="translate(15 48) rotate(20)">前</text>
      <text transform="translate(48 49) rotate(-20)">右</text>
    </g>
  </svg>
);

/* ---------- right toolbar ---------- */

const Magnifier: FC = () => (
  <>
    <circle cx="9" cy="17" r="8" fill="#fafafa" stroke="#666" strokeWidth="2" />
    <path d="M15 23l8 8" stroke="#666" strokeWidth="3.500" />
  </>
);

interface IViewTool {
  name: string;
  art: ReactNode;
  menu?: boolean;
  active?: boolean;
}

const SMALL_TOOLS: IViewTool[] = [
  {
    name: "machine view",
    menu: true,
    art: (
      <>
        <path d="M9 6.500h13v6H9zM9 26.500h19v5H9z" fill="#45b5bf" stroke="#2b8d96" />
        <path d="M2.500 0.500h7v31h-7z" fill="#ddd" stroke="#aaa" />
        <path d="M24 2.500h4l2 2v9l-2 3h-4l-2-3v-9z" fill="#ddd" stroke="#aaa" />
        <path d="M24 16h4v6h-4z" fill="#f90" />
      </>
    ),
  },
  {
    name: "view from top",
    menu: true,
    art: (
      <>
        <path d="M0.500 31.500v-23l8-8h23v23l-8 8zM8.500 8v15.500h23M8.500 23.500l-8 8M23.500 8.500v23" fill="none" stroke="#555" />
        <path d="M0.500 8.500l8-8h23l-8 8z" fill="#6ab0e6" stroke="#555" />
      </>
    ),
  },
  {
    name: "isometric",
    menu: true,
    art: (
      <>
        <path d="M15.500 0.500l14 8v15l-14 8-14-8v-15z" fill="#f2f2f2" stroke="#666" />
        <path d="M1.500 8.500l14 7 9-4M15.500 15.500v16" fill="none" stroke="#555" />
        <path d="M19 2.500l10.500 6v13z" fill="#6ab0e6" />
      </>
    ),
  },
  {
    name: "previous zoom",
    art: (
      <>
        <Magnifier />
        <path d="M19 3a7 7 0 1 1 1 10" fill="none" stroke="#1a8fe8" strokeWidth="2" />
        <path d="M16 1v7h7z" fill="#1a8fe8" />
      </>
    ),
  },
];

const LARGE_TOOLS: IViewTool[] = [
  {
    name: "refresh",
    art: (
      <>
        <path d="M2.500 0.500h14l9 9v20h-23z" fill="#f2f2f2" stroke="#666" />
        <path d="M16.500 0.500l9 9h-9z" fill="#555" />
        <circle cx="21" cy="25" r="8" fill="#fff" />
        <path d="M15 23a6 6 0 0 1 11-2M27 27a6 6 0 0 1-11 2" fill="none" stroke="#1a8fe8" strokeWidth="2" />
        <path d="M24 24h6l-3-4zM12 26h6l-3 4z" fill="#1a8fe8" />
      </>
    ),
  },
  {
    name: "zoom to fit",
    art: (
      <>
        <g transform="translate(0 1) scale(0.950)">
          <Magnifier />
        </g>
        <path d="M17.500 0.500h14v14h-14z" fill="#fff" stroke="#555" />
        <path d="M20 3l9 9M29 3l-9 9M20 6V3h3M26 3h3v3M29 9v3h-3M23 12h-3V9" stroke="#555" fill="none" />
      </>
    ),
  },
  {
    name: "zoom box",
    menu: true,
    art: (
      <>
        <Magnifier />
        <path d="M18.500 0.500h13v9h-13z" fill="#fff" stroke="#555" />
      </>
    ),
  },
  {
    name: "shaded",
    menu: true,
    active: true,
    art: (
      <>
        <path d="M0 8l8-8h24l-8 8z" fill="#b9dcf7" stroke="#7fb2da" strokeWidth="0.600" />
        <path d="M24 8l8-8v24l-8 8z" fill="#3f8ec9" />
        <path d="M0 8h24v24H0z" fill="#6cb3e8" />
        <path d="M0 8h24L0 32z" fill="#8cc5f0" />
      </>
    ),
  },
  {
    name: "wireframe",
    art: (
      <path
        d="M0.500 8.500h23v23h-23zM8.500 8V0.500h23v23H24M23.500 8.500l8-8M0.500 8.500l8-8M23.500 31.500l8-8M0.500 31.500l8-8V10M10 23.500h12"
        fill="none"
        stroke="#555"
      />
    ),
  },
  {
    name: "translucent",
    art: (
      <>
        <path d="M0.500 8.500l8-8h23v23l-8 8h-23z" fill="#8ccafc" />
        <path
          d="M0.500 8.500h23v23h-23zM8.500 0.500h23v23M23.500 8.500l8-8M0.500 8.500l8-8v23l-8 8M23.500 31.500l8-8h-23"
          fill="none"
          stroke="#4a8fc4"
        />
      </>
    ),
  },
  {
    name: "box select",
    menu: true,
    art: (
      <>
        <path d="M8 11.500H1.500v16h29v-16H24" fill="none" stroke="#555" />
        <path d="M10 2v18l4-4 4 8 3-1.500-3-8h6z" fill="#1a8fe8" />
      </>
    ),
  },
];

const LAST_TOOL: IViewTool = {
  name: "undo select",
  art: (
    <>
      <path d="M1 2v25l6-6 4 10 4-2-4-9h9z" fill="#1a8fe8" />
      <path d="M19 3a6 6 0 1 1 3 10" fill="none" stroke="#777" strokeWidth="1.500" />
      <path d="M17 1v6h6z" fill="#777" />
    </>
  ),
};

const ViewTool: FC<{ tool: IViewTool; height: string }> = ({ tool, height }) => (
  <button type="button" aria-label={tool.name} className={`relative flex w-10 items-center justify-center ${height}`}>
    <span
      className={`flex size-10 items-center justify-center border ${
        tool.active ? "border-[#99d1ff] bg-[#cce8ff]" : "border-transparent"
      }`}
    >
      <svg width="32" height="32" viewBox="0 0 32 32">
        {tool.art}
      </svg>
    </span>
    {tool.menu && (
      <svg width="5" height="5" viewBox="0 0 5 5" className="absolute right-0 bottom-1">
        <path d="M5 0v5H0z" fill="#111" />
      </svg>
    )}
  </button>
);

const ViewToolbar: FC = () => (
  <aside className="mr-[1px] flex w-[55px] shrink-0 flex-col border-x border-[#c8c8c8] bg-white">
    <div className="flex h-[38px] items-center justify-end border-b border-[#c8c8c8] bg-[#f0f0f0] pr-1.5">
      <button type="button" aria-label="close toolbar">
        <CloseIcon />
      </button>
    </div>
    <div className="flex flex-col items-center pt-1 pl-1">
      {SMALL_TOOLS.map((tool) => (
        <ViewTool key={tool.name} tool={tool} height="h-10" />
      ))}
      <div className="h-[3px]" />
      {LARGE_TOOLS.map((tool) => (
        <ViewTool key={tool.name} tool={tool} height="h-[47px]" />
      ))}
      <ViewTool tool={LAST_TOOL} height="h-8" />
    </div>
  </aside>
);

/* ---------- status bar ---------- */

const Field: FC<{ label: string; value?: string; width?: string; muted?: boolean }> = ({
  label,
  value = "",
  width = "w-[76px]",
  muted,
}) => (
  <input
    aria-label={label}
    defaultValue={value}
    className={`h-[30px] shrink-0 border bg-[#f0f0f0] pb-[7px] pl-1 outline-1 -outline-offset-2 outline-white ${width} ${
      muted ? "border-[#ccc]" : "border-[#7a7a7a]"
    }`}
  />
);

const Slot: FC<{ children: ReactNode }> = ({ children }) => (
  <span className="flex w-[29px] shrink-0 items-center justify-center">
    <svg width="24" height="24" viewBox="0 0 24 24" fill="none" stroke="#2c92e0">
      {children}
    </svg>
  </span>
);

const ImeBar: FC = () => (
  <div className="absolute right-0 bottom-0 h-[42px] w-[174px]">
    <div className="absolute top-[5px] right-0 flex h-[25px] w-[152px] items-center gap-[9px] bg-white pl-[17px] text-[14px] leading-[14px] font-bold text-[#1470d4]">
      英
      <svg width="14" height="16" viewBox="0 0 14 16" fill="#1470d4" className="shrink-0">
        <circle cx="3" cy="5" r="2" />
        <path d="M9 8h3q1 4-3 6z" />
      </svg>
      <svg width="12" height="16" viewBox="0 0 12 16" className="shrink-0">
        <rect x="3" y="0" width="6" height="10" rx="3" fill="#1470d4" />
        <path d="M1 7a5 5 0 0 0 10 0M6 12v4" fill="none" stroke="#1470d4" strokeWidth="1.500" />
      </svg>
      <svg width="16" height="13" viewBox="0 0 16 13" className="shrink-0">
        <rect x="1" y="1" width="14" height="11" fill="none" stroke="#1470d4" strokeWidth="1.600" />
        <path d="M3 4h10M3 6.500h10M4 9.500h8" stroke="#1470d4" strokeWidth="1.400" strokeDasharray="2 1" />
      </svg>
      <svg width="16" height="14" viewBox="0 0 16 14" className="shrink-0">
        <path d="M5 0q3 2 6 0l5 3-2 4-2-1v8H4V6L2 7 0 3z" fill="#1470d4" />
      </svg>
      <svg width="14" height="14" viewBox="0 0 14 14" className="shrink-0" fill="#1470d4">
        <rect width="6" height="6" rx="1.500" />
        <rect x="8" width="6" height="6" rx="1.500" />
        <rect y="8" width="6" height="6" rx="1.500" />
        <rect x="8" y="8" width="6" height="6" rx="1.500" />
      </svg>
    </div>
    <svg width="32" height="32" viewBox="0 0 32 32" className="absolute top-0 left-0">
      <path d="M2 6l25-5 4 25-25 5z" fill="#f4511e" />
      <path
        d="M24 7Q10 4 10 11c0 4 13 3 13 9 0 5-8 5-14 3"
        fill="none"
        stroke="#fff"
        strokeWidth="4"
        strokeLinecap="round"
      />
    </svg>
    <p className="absolute bottom-[1px] left-[1px] font-[family-name:'Liberation_Mono','Noto_Sans_CJK_SC',monospace] text-[15px] leading-4 whitespace-nowrap text-[#777] [text-shadow:1px_1px_0_#fff,-1px_-1px_0_#ddd]">
      UG爱好者论坛@UG某某某
    </p>
  </div>
);

const StatusBar: FC = () => (
  <footer className="relative flex h-[42px] shrink-0 items-center pl-1.5">
    <svg width="24" height="24" viewBox="0 0 24 24" className="shrink-0" fill="none">
      <path d="M1 14l4-4h18l-3 4z" fill="#8ac4f2" />
      <path d="M1 14h19v8H1z" fill="#4a9fdb" />
      <path d="M20 14l3-4v8l-3 4z" fill="#2f7db8" />
      <path d="M9.500 11V1M7.500 3.500l2-2.500 2 2.500" stroke="#1a8fe8" />
      <path d="M9.500 11l7-7M13 4h3.500v3.500" stroke="#2bb35a" />
      <path d="M9.500 11H20M17.500 9l2.500 2-2.500 2" stroke="#d22" />
      <path d="M24 19v5h-5z" fill="#111" />
    </svg>
    <div className="relative ml-1 w-[118px] shrink-0">
      <select aria-label="active workplane" className="h-[23px] w-full appearance-none bg-[#e1e1e1] pl-[3px]">
        <option>1</option>
      </select>
      <Chevron />
    </div>
    <button type="button" aria-label="X axis" className="ml-2">
      <svg width="20" height="20" viewBox="0 0 20 20" className="overflow-visible">
        <path d="M0.500 4l5-3v8l-5 4z" fill="#6ab0e6" stroke="#2f7db8" />
        <path d="M9.500 11V2M8 4l1.500-2.500L11 4M9.500 11L2 15M9.500 11l8 5" fill="none" stroke="#2c92e0" />
        <text x="13" y="8" fontSize="9" fill="#1a8fe8">
          X
        </text>
      </svg>
    </button>
    <button type="button" aria-label="Y axis" className="ml-[5px]">
      <svg width="20" height="20" viewBox="0 0 20 20" className="overflow-visible">
        <path d="M12 1l6 3v8l-6-3z" fill="#6ab0e6" stroke="#2f7db8" />
        <path d="M9.500 10V2M8 4l1.500-2.500L11 4M9.500 10L2 14M9.500 10l8 5" fill="none" stroke="#2c92e0" />
        <text x="7" y="20" fontSize="9" fill="#1a8fe8">
          Y
        </text>
      </svg>
    </button>
    <button type="button" aria-label="Z axis" className="ml-1 border border-[#99d1ff] bg-[#c2dff5] p-[1px]">
      <svg width="20" height="20" viewBox="0 0 20 20" className="overflow-visible">
        <path d="M10 11l6 4-6 4-6-4z" fill="#4a9fdb" stroke="#2f7db8" />
        <path d="M10 12V2M8.500 4.500L10 2l1.500 2.500M10 12l-8 4M10 12l8 4" fill="none" stroke="#3a6f99" />
        <text x="0" y="8" fontSize="9" fill="#1a8fe8">
          Z
        </text>
      </svg>
    </button>
    <button type="button" aria-label="unlock" className="ml-1.5">
      <svg width="18" height="20" viewBox="0 0 18 20">
        <path d="M7 9V7L3 6.500a3 3 0 1 1 5-4" fill="none" stroke="#222" strokeWidth="2" />
        <rect x="4.500" y="9.500" width="11" height="10" fill="#ddd" stroke="#222" />
        <path d="M5 12h10M5 14.500h10M5 17h10" stroke="#333" strokeWidth="1.300" />
      </svg>
    </button>
    <svg width="20" height="20" viewBox="0 0 20 20" className="ml-5 shrink-0">
      <path
        d="M0 2.500h20M0 6.500h20M0 10.500h20M0 14.500h20M0 18.500h20M2.500 0v20M6.500 0v20M10.500 0v20M14.500 0v20M18.500 0v20"
        stroke="#bbb"
      />
    </svg>
    <div className="ml-1 flex shrink-0 items-center">
      <Field label="grid" width="w-[70px]" muted />
      <span className="w-[13px]" />
      <Field label="x" value="-276.58" />
      <span className="w-[3px]" />
      <Field label="y" value="-5e-6" />
      <span className="w-[3px]" />
      <Field label="z" value="50" />
    </div>
    <svg width="20" height="20" viewBox="0 0 20 20" className="ml-[5px] shrink-0" stroke="#bbb" fill="none">
      <path d="M0.500 0.500h19v19H0.500zM0 2h20" />
      <path d="M9 6.500h8M9 11.500h8M9 16.500h8" stroke="#ddd" strokeWidth="2" />
      <path d="M3 5l3 3m0-3L3 8M3 10l1.500 1.500L6 10M4.500 11v2M3 15.500h3L3 18h3" />
    </svg>
    <svg width="24" height="24" viewBox="0 0 24 24" className="ml-[5px] shrink-0">
      <path d="M0.500 0.500h23v23H0.500z" fill="#bfdcf4" stroke="#99d1ff" />
      <path d="M7 16l7-7M10 8.500h4.500V13" stroke="#999" fill="none" />
      <circle cx="5" cy="18" r="2.500" fill="#ccc" stroke="#aaa" />
      <circle cx="17" cy="6" r="2.500" fill="#ccc" stroke="#aaa" />
    </svg>
    <span className="w-[3px] shrink-0" />
    <Field label="info" width="w-[120px]" muted />
    <svg width="20" height="22" viewBox="0 0 20 22" className="ml-[15px] shrink-0">
      <path d="M0.500 0.500h13v19h-13z" fill="#e4e4e4" stroke="#555" />
      <path d="M2 3.500h10" stroke="#555" strokeWidth="2" />
      <path d="M2 8.500h2m2 0h2m2 0h2M2 12.500h2m2 0h2m2 0h2M2 16.500h2m2 0h2m2 0h2" stroke="#555" strokeWidth="2" />
      <path d="M11 10h9v12h-9z" fill="#f0f0f0" />
      <path d="M12 12h3v10h-3zM17 12h3v10h-3z" fill="#1a8fe8" />
    </svg>
    <svg
      width="22"
      height="20"
      viewBox="0 0 22 20"
      className="mr-[3px] ml-4 shrink-0 overflow-visible"
      fill="none"
      stroke="#2c92e0"
    >
      <path d="M0.500 0v10M10.500 0v10M20.500 0v10M0 5.500h21M3.500 3v5M5.500 3v5M7.500 3v5M13.500 3v5M15.500 3v5M17.500 3v5" />
      <g fontSize="9" stroke="none" fill="#1a7fd0">
        <text x="0" y="19">
          0
        </text>
        <text x="8" y="19">
          1
        </text>
        <text x="16" y="19">
          2
        </text>
      </g>
    </svg>
    <Field label="units" value="毫米" />
    <Slot>
      <circle cx="12" cy="12" r="8" strokeWidth="1.300" />
      <path d="M12 0v24M0 12h24" strokeWidth="1.300" />
    </Slot>
    <Field label="tolerance" value="0.03" />
    <Slot>
      <path d="M12.500 3.500h8v10l-2 2h-4l-2-2zM2.500 13v3M4.500 13v3M6.500 13v3M8.500 13v3M10.500 13v3" />
    </Slot>
    <Field label="thickness" value="0.3" />
    <Slot>
      <path d="M8.500 2.500h9v11l-2 2h-5l-2-2zM11 17.500h4M11 19.500h4M11 21.500h4" />
    </Slot>
    <Field label="axial thickness" value="0.2" />
    <Slot>
      <circle cx="12" cy="13" r="6.500" />
      <path d="M5 21L19 4" />
    </Slot>
    <Field label="diameter" value="16.0" />
    <Slot>
      <path d="M20 4L9 18M3 13q0 6 5 9M8.500 13v5.500l5-1.500" />
    </Slot>
    <Field label="tip radius" value="0.8" />
    <label className="ml-[7px] flex shrink-0 items-center gap-[2px]">
      转速
      <Field label="spindle speed" value="8000.0" />
    </label>
    <label className="ml-[7px] flex shrink-0 items-center gap-[2px]">
      进给
      <Field label="feed rate" value="8000.0" />
    </label>
    <label className="ml-[7px] flex shrink-0 items-center gap-[2px]">
      行距
      <Field label="stepover" value="11.0" />
    </label>
    <ImeBar />
  </footer>
);

const App: FC = () => {
  return (
    <div className="flex h-screen flex-col overflow-hidden border border-[#5a585c] bg-[#f0f0f0] font-[family-name:'Noto_Sans','Noto_Sans_CJK_SC',sans-serif] text-[12px] text-black">
      <TitleBar />
      <TabBar />
      <Ribbon />
      <div className="flex min-h-0 flex-1">
        <Explorer />
        <main className="relative min-w-0 flex-1 bg-black">
          <ToolHolder />
          <AxisTriad />
          <ViewCube />
        </main>
        <ViewToolbar />
      </div>
      <StatusBar />
    </div>
  );
};

export default App;
